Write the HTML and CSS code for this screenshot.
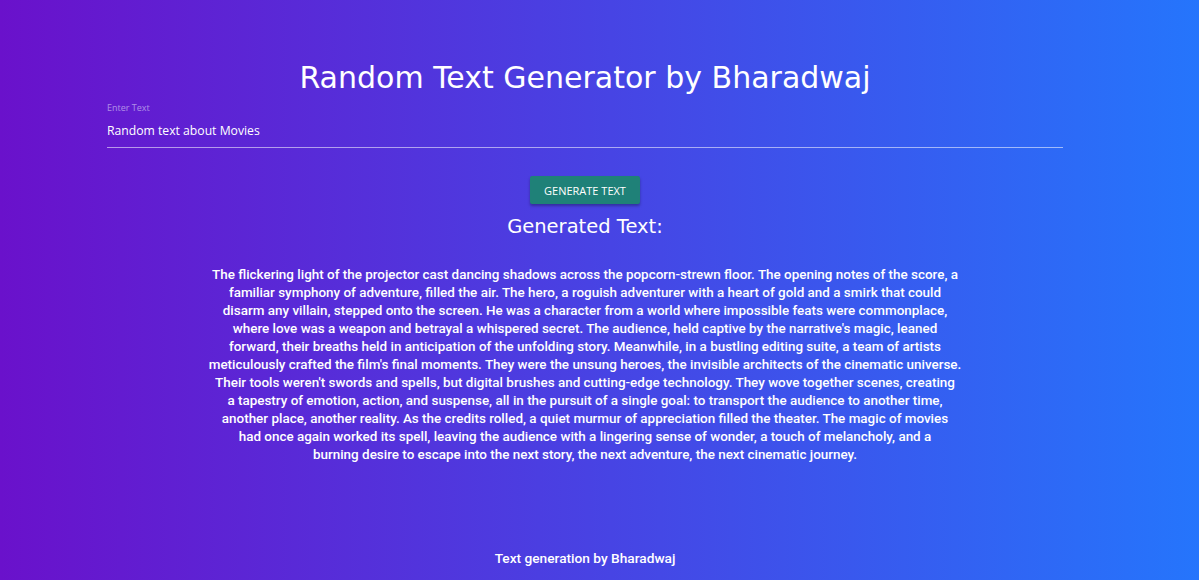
FILE: index.html
```html
<!DOCTYPE html>
<html>
<head>
<meta charset="utf-8">
<link rel="stylesheet" href="styles.css">
</head>
<body>
<div class="page">
  <h1 class="title">Random Text Generator by Bharadwaj</h1>
  <div class="field">
    <label class="label">Enter Text</label>
    <div class="input">Random text about Movies</div>
  </div>
  <button class="btn">GENERATE TEXT</button>
  <h2 class="subtitle">Generated Text:</h2>
  <p class="output">The flickering light of the projector cast dancing shadows across the popcorn-strewn floor. The opening notes of the score, a familiar symphony of adventure, filled the air. The hero, a roguish adventurer with a heart of gold and a smirk that could disarm any villain, stepped onto the screen. He was a character from a world where impossible feats were commonplace, where love was a weapon and betrayal a whispered secret. The audience, held captive by the narrative's magic, leaned forward, their breaths held in anticipation of the unfolding story. Meanwhile, in a bustling editing suite, a team of artists meticulously crafted the film's final moments. They were the unsung heroes, the invisible architects of the cinematic universe. Their tools weren't swords and spells, but digital brushes and cutting-edge technology. They wove together scenes, creating<br>a tapestry of emotion, action, and suspense, all in the pursuit of a single goal: to transport the audience to another time, another place, another reality. As the credits rolled, a quiet murmur of appreciation filled the theater. The magic of movies<br>had once again worked its spell, leaving the audience with a lingering sense of wonder, a touch of melancholy, and a<br>burning desire to escape into the next story, the next adventure, the next cinematic journey.</p>
  <footer class="footer">Text generation by Bharadwaj</footer>
</div>
</body>
</html>
```
FILE: styles.css
```css
html, body {
  margin: 0;
  padding: 0;
  height: 100%;
}
body {
  background: linear-gradient(to right, #6a11cb, #2575fc);
  color: #fff;
  font-family: "DejaVu Sans", sans-serif;
  overflow: hidden;
}
.page {
  width: 1170px;
  height: 580px;
  display: flex;
  flex-direction: column;
  align-items: center;
}
.title {
  margin: 60px 0 0;
  font-size: 30px;
  font-weight: 400;
  line-height: 36px;
}
.field {
  width: 956px;
  margin-top: 6px;
  display: flex;
  flex-direction: column;
  border-bottom: 1px solid rgba(255,255,255,0.55);
}
.label {
  font-family: "Open Sans", sans-serif;
  font-size: 9px;
  color: rgba(255,255,255,0.5);
  line-height: 12px;
}
.input {
  font-family: "Open Sans", sans-serif;
  font-size: 12.2px;
  line-height: 18px;
  padding: 8px 0 7px;
}
.btn {
  margin-top: 28px;
  width: 110px;
  height: 28px;
  border: none;
  border-radius: 2px;
  background: #1f8178;
  color: #fff;
  font-family: "Open Sans", sans-serif;
  font-size: 11px;
  box-shadow: 0 2px 3px rgba(0,0,0,0.3);
}
.subtitle {
  margin: 10px 0 0;
  font-size: 19.5px;
  font-weight: 400;
  line-height: 26px;
}
.output {
  margin: 26px 0 0;
  width: 756px;
  text-align: center;
  font-family: Roboto, sans-serif;
  font-weight: 500;
  font-size: 13.45px;
  line-height: 18px;
}
.footer {
  margin-top: auto;
  margin-bottom: 14px;
  font-family: Roboto, sans-serif;
  font-weight: 500;
  font-size: 13.7px;
}
```
